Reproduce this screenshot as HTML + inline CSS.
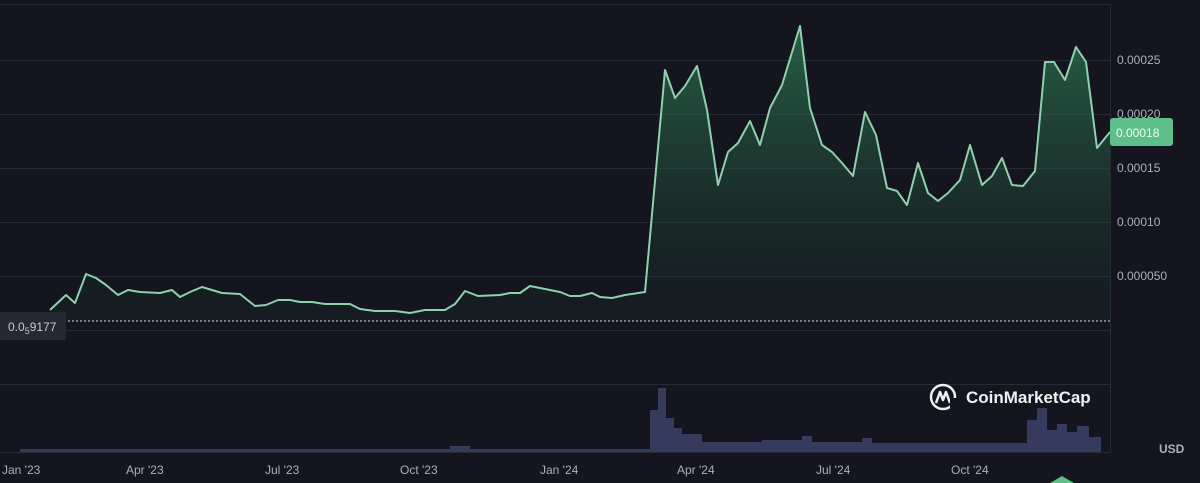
<!DOCTYPE html>
<html><head><meta charset="utf-8"><style>
html,body{margin:0;padding:0;background:#14151f;width:1200px;height:483px;overflow:hidden;font-family:"Liberation Sans",sans-serif}
svg{display:block}
</style></head><body>
<svg width="1200" height="483" viewBox="0 0 1200 483">
<defs>
<linearGradient id="g" x1="0" y1="0" x2="0" y2="1">
<stop offset="0" stop-color="#2f7a55" stop-opacity="0.75"/>
<stop offset="1" stop-color="#1a3a2c" stop-opacity="0.15"/>
</linearGradient>
</defs>
<rect width="1200" height="483" fill="#14151f"/>
<g stroke="#262a36" stroke-width="1">
<line x1="0" y1="4.5" x2="1110" y2="4.5"/>
<line x1="0" y1="60.5" x2="1110" y2="60.5"/>
<line x1="0" y1="114.5" x2="1110" y2="114.5"/>
<line x1="0" y1="168.5" x2="1110" y2="168.5"/>
<line x1="0" y1="222.5" x2="1110" y2="222.5"/>
<line x1="0" y1="276.5" x2="1110" y2="276.5"/>
<line x1="0" y1="330.5" x2="1110" y2="330.5"/>
<line x1="0" y1="384.5" x2="1110" y2="384.5"/>
<line x1="0" y1="452.5" x2="1110" y2="452.5"/>
<line x1="1110.5" y1="4" x2="1110.5" y2="452"/>
</g>
<polygon fill="url(#g)" points="50,310 66,295 75,303 86,274 96,278 106,285 118,295 128,290 140,292 160,293 172,290 180,297 190,292 202,287 212,290 222,293 240,294 255,306 266,305 278,300 290,300 300,302 312,302 325,304 350,304 360,309 375,311 395,311 410,313 425,310 445,310 455,304 465,291 478,296 500,295 510,293 520,293 530,286 545,289 560,292 570,296 580,296 592,293 600,297 612,298 625,295 645,292 665,70 675,98 685,86 697,66 707,110 718,185 728,152 738,143 750,121 760,145 770,108 782,85 800,26 810,108 822,145 832,152 842,163 853,176 865,112 876,135 887,188 897,191 907,205 918,163 928,193 938,201 948,193 960,180 970,145 982,185 992,176 1002,158 1012,185 1023,186 1035,171 1045,62 1054,62 1065,80 1076,47 1086,62 1097,148 1110,132 1110,321 50,321"/>
<line x1="0" y1="321" x2="1110" y2="321" stroke="#9aa0ad" stroke-width="1.5" stroke-dasharray="2,2"/>
<polyline fill="none" stroke="#8fd1ae" stroke-width="2" stroke-linejoin="round" points="50,310 66,295 75,303 86,274 96,278 106,285 118,295 128,290 140,292 160,293 172,290 180,297 190,292 202,287 212,290 222,293 240,294 255,306 266,305 278,300 290,300 300,302 312,302 325,304 350,304 360,309 375,311 395,311 410,313 425,310 445,310 455,304 465,291 478,296 500,295 510,293 520,293 530,286 545,289 560,292 570,296 580,296 592,293 600,297 612,298 625,295 645,292 665,70 675,98 685,86 697,66 707,110 718,185 728,152 738,143 750,121 760,145 770,108 782,85 800,26 810,108 822,145 832,152 842,163 853,176 865,112 876,135 887,188 897,191 907,205 918,163 928,193 938,201 948,193 960,180 970,145 982,185 992,176 1002,158 1012,185 1023,186 1035,171 1045,62 1054,62 1065,80 1076,47 1086,62 1097,148 1110,132"/>
<g fill="#363a5c">
<rect x="20" y="449" width="630" height="3"/>
<rect x="450" y="446" width="20" height="6"/>
<rect x="650" y="410" width="8" height="42"/>
<rect x="658" y="388" width="8" height="64"/>
<rect x="666" y="418" width="8" height="34"/>
<rect x="674" y="428" width="8" height="24"/>
<rect x="682" y="434" width="20" height="18"/>
<rect x="702" y="442" width="60" height="10"/>
<rect x="762" y="440" width="40" height="12"/>
<rect x="802" y="436" width="10" height="16"/>
<rect x="812" y="442" width="50" height="10"/>
<rect x="862" y="438" width="10" height="14"/>
<rect x="872" y="443" width="155" height="9"/>
<rect x="1027" y="420" width="10" height="32"/>
<rect x="1037" y="408" width="10" height="44"/>
<rect x="1047" y="430" width="10" height="22"/>
<rect x="1057" y="424" width="10" height="28"/>
<rect x="1067" y="432" width="10" height="20"/>
<rect x="1077" y="426" width="12" height="26"/>
<rect x="1089" y="437" width="12" height="15"/>
</g>
<rect x="0" y="312" width="66" height="28" rx="2" fill="#262833"/>
<text x="8" y="331" fill="#c8ccd6" font-size="12">0.0<tspan font-size="9" dy="3">5</tspan><tspan dy="-3">9177</tspan></text>
<rect x="1110" y="118" width="63" height="28" rx="3" fill="#5fbf88"/>
<text x="1116" y="137" fill="#eafff2" font-size="12">0.00018</text>
<g fill="#aab0bd" font-size="12">
<text x="1117" y="64">0.00025</text>
<text x="1117" y="118">0.00020</text>
<text x="1117" y="172">0.00015</text>
<text x="1117" y="226">0.00010</text>
<text x="1117" y="280">0.000050</text>
<text x="1159" y="453" font-weight="bold" font-size="12">USD</text>
<text x="2" y="474">Jan '23</text>
<text x="126" y="474">Apr '23</text>
<text x="265" y="474">Jul '23</text>
<text x="400" y="474">Oct '23</text>
<text x="540" y="474">Jan '24</text>
<text x="677" y="474">Apr '24</text>
<text x="816" y="474">Jul '24</text>
<text x="951" y="474">Oct '24</text>
</g>
<path d="M1050 483 L1062 476 L1074 483Z" fill="#5fbf88"/>
<circle cx="943" cy="397" r="12" fill="none" stroke="#eef0f4" stroke-width="2.5"/>
<path d="M936 403 L940 392 L943 400 L946 392 L950 403" fill="none" stroke="#eef0f4" stroke-width="2.5" stroke-linejoin="round"/>
<rect x="950" y="398" width="8" height="10" fill="#14151f"/>
<text x="966" y="403" fill="#eef0f4" font-size="17" font-weight="bold">CoinMarketCap</text>
</svg>
</body></html>
